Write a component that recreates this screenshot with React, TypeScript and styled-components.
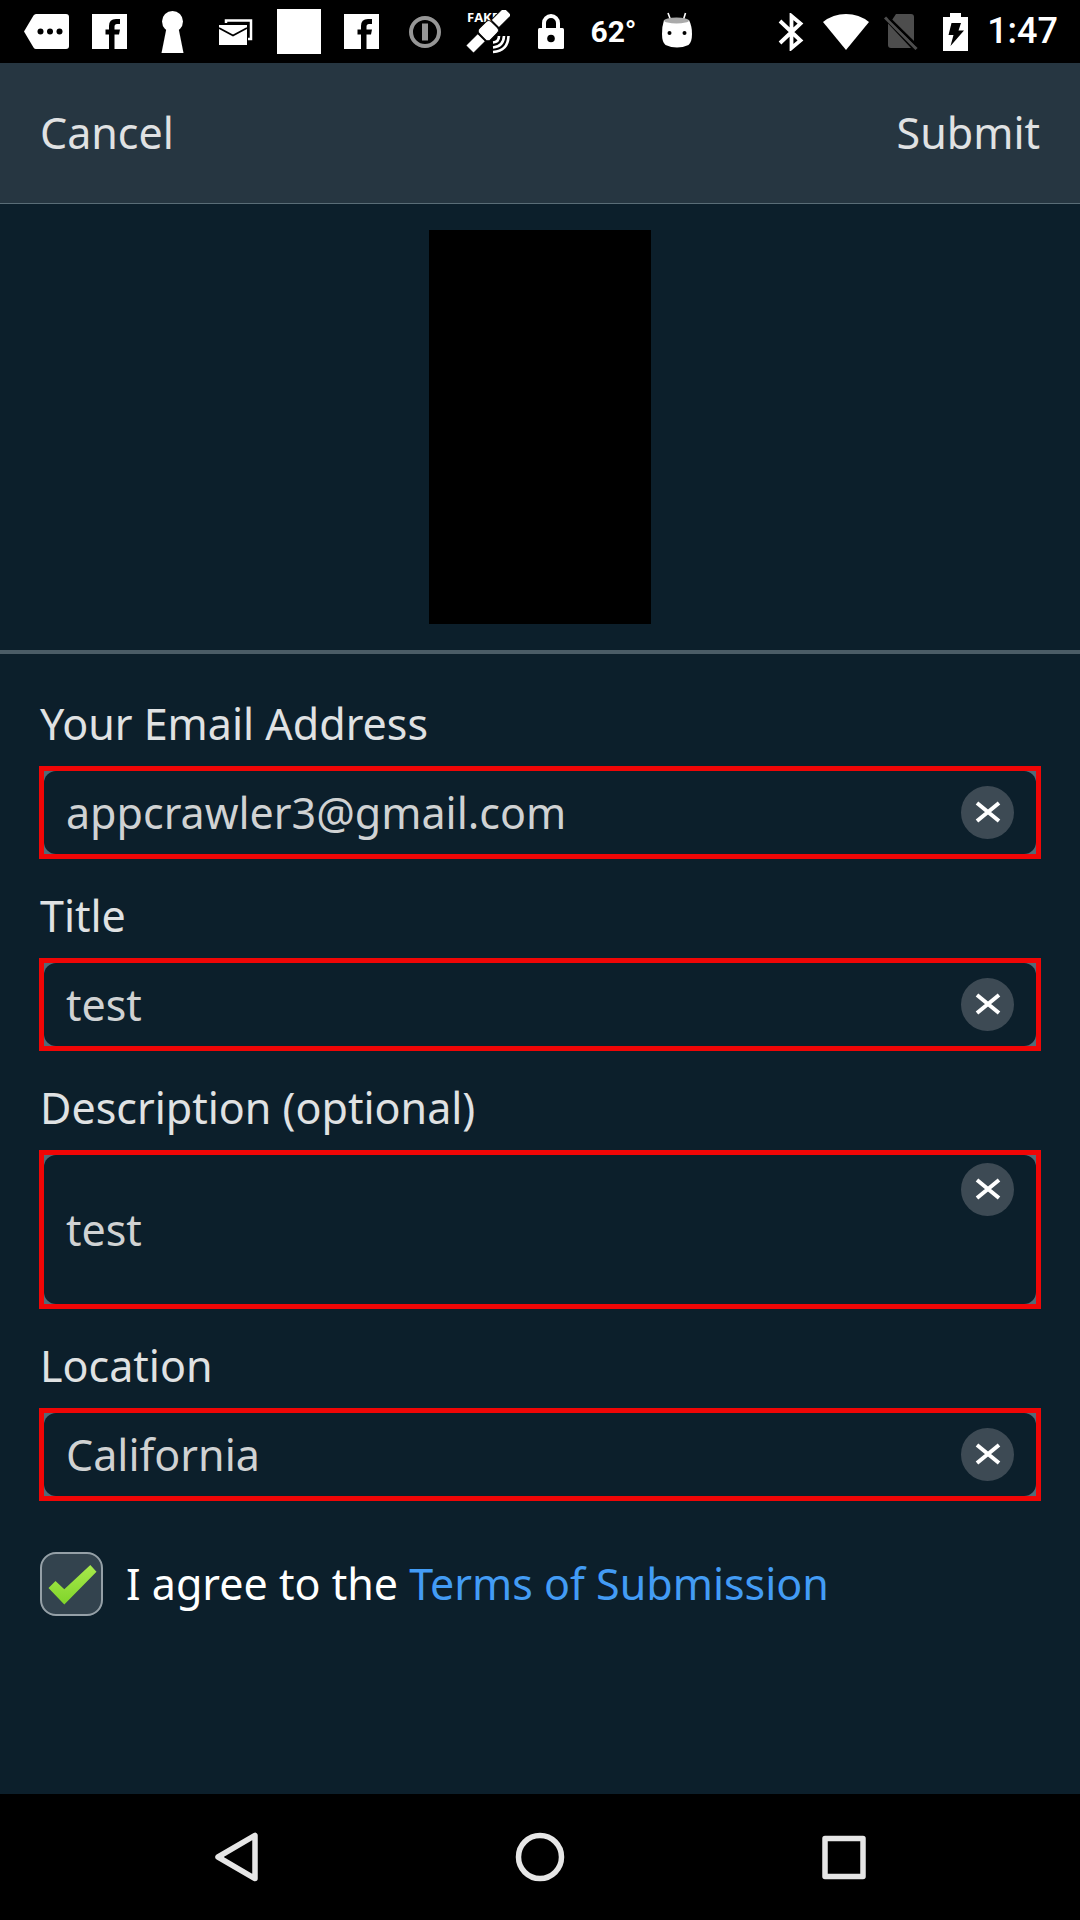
import React, { useState } from "react";
import styled, { createGlobalStyle } from "styled-components";

const GlobalStyle = createGlobalStyle`
  *, *::before, *::after { box-sizing: border-box; }
  body { margin: 0; background: #0c1f2b; }
  button, input, textarea { font: inherit; color: inherit; margin: 0; }
`;

const Screen = styled.div`
  display: flex;
  flex-direction: column;
  min-height: 100vh;
  background: #0c1f2b;
  color: #e0e2e3;
  font-family: "Noto Sans", "Open Sans", sans-serif;
  font-size: 43px;
  line-height: 60px;
`;

const StatusBar = styled.div`
  display: flex;
  justify-content: space-between;
  align-items: center;
  height: 63px;
  padding: 0 22px 0 15px;
  background: #000;
  color: #fff;
  font-family: Roboto, sans-serif;
  font-weight: 500;
`;

const StatusGroup = styled.div`
  display: flex;
  align-items: center;
`;

const Slot = styled.span<{ $width: number }>`
  display: flex;
  justify-content: center;
  width: ${(p) => p.$width}px;
  line-height: 63px;

  svg {
    display: block;
    flex: none;
  }
`;

const Temperature = styled.span`
  font-size: 30px;
  font-weight: 700;
`;

const Clock = styled.time`
  margin-left: 4px;
  font-size: 36px;
  line-height: 63px;
`;

const Header = styled.header`
  display: flex;
  justify-content: space-between;
  align-items: center;
  height: 141px;
  padding: 0 40px;
  background: #263641;
  border-bottom: 1px solid #5a6d77;
`;

const HeaderButton = styled.button`
  padding: 0;
  border: 0;
  background: none;
  cursor: pointer;
`;

const Preview = styled.section`
  display: flex;
  justify-content: center;
  padding: 26px 0;
  border-bottom: 4px solid #4b5c66;
`;

const PreviewImage = styled.div`
  width: 222px;
  height: 394px;
  background: #000;
`;

const Form = styled.form`
  display: flex;
  flex: 1;
  flex-direction: column;
  padding: 40px 39px;
`;

const Field = styled.div`
  display: flex;
  flex-direction: column;
  gap: 12px;
  margin-bottom: 27px;
`;

const Label = styled.label`
  padding-left: 1px;
`;

const Outline = styled.div`
  border: 5px solid #f00606;
  background: #526b78;
`;

const FieldBody = styled.div<{ $tall?: boolean }>`
  display: flex;
  align-items: ${(p) => (p.$tall ? "flex-start" : "center")};
  height: ${(p) => (p.$tall ? 149 : 83)}px;
  padding: ${(p) => (p.$tall ? 8 : 0)}px 22px;
  border-radius: 12px;
  background: #0c1f2b;
  color: #d0d2d3;
`;

const TextInput = styled.input`
  flex: 1;
  min-width: 0;
  height: 60px;
  padding: 0;
  border: 0;
  outline: 0;
  background: none;
`;

const TextArea = styled.textarea`
  flex: 1;
  min-width: 0;
  height: 133px;
  padding: 37px 0 36px;
  border: 0;
  outline: 0;
  resize: none;
  overflow: hidden;
  background: none;
`;

const ClearButton = styled.button`
  display: flex;
  justify-content: center;
  align-items: center;
  width: 53px;
  height: 53px;
  padding: 0 0 2px;
  border: 0;
  border-radius: 50%;
  background: #3d4a54;
  cursor: pointer;
`;

const Agreement = styled.div`
  display: flex;
  align-items: center;
  gap: 23px;
  min-height: 64px;
  margin-top: 24px;
  padding-left: 1px;
  color: #fff;
`;

const CheckFrame = styled.span`
  display: grid;
  width: 63px;
  height: 64px;

  > * {
    grid-area: 1 / 1;
  }

  svg {
    pointer-events: none;
  }
`;

const CheckInput = styled.input`
  appearance: none;
  width: 63px;
  height: 64px;
  border: 2px solid #95a0a7;
  border-radius: 16px;
  background: #33434e;

  &:not(:checked) + svg {
    visibility: hidden;
  }
`;

const TermsLink = styled.a`
  color: #439cf5;
  text-decoration: none;
`;

const NavBar = styled.nav`
  display: grid;
  grid-template-columns: repeat(3, 1fr);
  height: 126px;
  padding: 0 85px;
  background: #000;
`;

const NavButton = styled.button`
  display: flex;
  justify-content: center;
  align-items: center;
  padding: 0;
  border: 0;
  background: none;
  cursor: pointer;
`;

const MoreIcon = () => (
  <svg width="46" height="36" viewBox="0 0 46 36">
    <path d="M12 0H42a3 3 0 0 1 3 3V32a3 3 0 0 1-3 3H12Q10.500 35 9.500 33.500L0 17.500 9.500 1.500Q10.500 0 12 0Z" fill="#fff" />
    <g fill="#000"><circle cx="16.500" cy="17.500" r="3" /><circle cx="26" cy="17.500" r="3" /><circle cx="35.500" cy="17.500" r="3" /></g>
  </svg>
);

const FacebookIcon = () => (
  <svg width="36" height="36" viewBox="0 0 36 36">
    <path d="M0 0H35V35H0Z" fill="#fff" />
    <path d="M17 36V20.500H13.500V15.500H17V12Q17 5 24 5H28V10H25Q22.500 10 22.500 12.500V15.500H28L27 20.500H22.500V36Z" fill="#000" />
  </svg>
);

const KeyholeIcon = () => (
  <svg width="23" height="42" viewBox="0 0 23 42">
    <circle cx="11.500" cy="10.500" r="10.500" fill="#fff" />
    <path d="M5.500 17H17.500L22.500 42H.5Z" fill="#fff" />
  </svg>
);

const MailIcon = () => (
  <svg width="34" height="26" viewBox="0 0 34 26">
    <path d="M7 4V1.500H32V20H29" fill="none" stroke="#fff" strokeWidth="2.500" />
    <path d="M0 6H28V26H0Z" fill="#fff" />
    <path d="M0 9L14 16.500 28 9" fill="none" stroke="#000" strokeWidth="1.800" />
  </svg>
);

const BlankIcon = () => (
  <svg width="44" height="45" viewBox="0 0 44 45"><path d="M0 0H44V45H0Z" fill="#fff" /></svg>
);

const InfoIcon = () => (
  <svg width="32" height="32" viewBox="0 0 32 32">
    <circle cx="16" cy="16" r="14" fill="none" stroke="#969696" strokeWidth="4" />
    <path d="M16 7.500V24.500" stroke="#969696" strokeWidth="6" />
  </svg>
);

const SatelliteIcon = () => (
  <svg width="44" height="44" viewBox="0 0 44 44">
    <text x="1" y="12" fill="#fff" fontSize="13" fontWeight="700" fontFamily="Open Sans, sans-serif">FAKE</text>
    <g transform="rotate(45 22 21)" stroke="#000" strokeWidth="1" fill="#fff">
      <path d="M16.500 -7H27.500V11H16.500Z" />
      <path d="M16.500 30H27.500V47H16.500Z" />
      <rect x="14" y="12" width="16" height="17" rx="4" />
    </g>
    <g fill="none" stroke="#fff" strokeWidth="2.600">
      <path d="M33 26Q33 32 27 32.500" /><path d="M38 26Q37.500 36.500 27 37.500" /><path d="M42.500 26Q42 41 27 42" />
    </g>
  </svg>
);

const LockIcon = () => (
  <svg width="26" height="36" viewBox="0 0 26 36">
    <path d="M6 16V9a7 7 0 0 1 14 0V16" fill="none" stroke="#fff" strokeWidth="4" />
    <rect y="14" width="26" height="21" rx="1.500" fill="#fff" />
    <circle cx="13" cy="24.500" r="3.800" fill="#000" />
  </svg>
);

const AndroidIcon = () => (
  <svg width="32" height="40" viewBox="0 0 32 40">
    <path d="M7 1L10 9M24.500 1L22 9" stroke="#fff" strokeWidth="1.600" />
    <path d="M3 8H28Q31 14 31 22T27.500 33Q16 38 4.500 33Q1 30 1 22T3 8Z" fill="#fff" />
    <ellipse cx="15.500" cy="8.500" rx="12.500" ry="3" fill="#aaa" />
    <circle cx="8.500" cy="21" r="2" fill="#000" /><circle cx="23.500" cy="21" r="2" fill="#000" />
  </svg>
);

const BluetoothIcon = () => (
  <svg width="26" height="38" viewBox="0 0 26 38">
    <path d="M2 8L22.500 27.500 13.500 35V3L22.500 10.500 2 30" fill="none" stroke="#fff" strokeWidth="3.800" />
  </svg>
);

const WifiIcon = () => (
  <svg width="46" height="36" viewBox="0 0 46 36">
    <path d="M0 8Q10 0 23 0T46 8L23 36Z" fill="#fff" />
  </svg>
);

const NoSimIcon = () => (
  <svg width="34" height="36" viewBox="0 0 34 36">
    <path d="M12 0H27a3 3 0 0 1 3 3V29L8 6Z" fill="#4d4d4d" />
    <path d="M4 9.500L27 34H7a3 3 0 0 1-3-3Z" fill="#4d4d4d" />
    <path d="M1 3.500L32.500 35" stroke="#4d4d4d" strokeWidth="3" />
    <path d="M5 4L33 31.500" stroke="#000" strokeWidth="2.400" />
  </svg>
);

const BatteryIcon = () => (
  <svg width="25" height="38" viewBox="0 0 25 38">
    <path d="M0 4H7V0H18V4H25V38H0Z" fill="#fff" />
    <path d="M8.500 10H18L15.500 17.500H21L7.500 33L10.500 22H5.500Z" fill="#000" />
  </svg>
);

const CrossIcon = () => (
  <svg width="26" height="22" viewBox="0 0 26 22">
    <path d="M2 2L24 20M24 2L2 20" stroke="#fff" strokeWidth="4" />
  </svg>
);

const CheckIcon = () => (
  <svg width="63" height="64" viewBox="0 0 63 64">
    <defs>
      <linearGradient id="tick" x1="0" y1="0" x2="0" y2="1">
        <stop offset="0" stopColor="#a8ea4c" /><stop offset="1" stopColor="#80d42a" />
      </linearGradient>
    </defs>
    <path d="M8.500 36L15.500 29 24.300 37.300 50.300 13 56.500 19.700 24.300 52.500Z" fill="url(#tick)" />
  </svg>
);

const shapes = [
  { name: "Back", d: "M43 3.500V46.500L6 25Z" },
  { name: "Home", d: "M25 3.500A21.500 21.500 0 0 1 25 46.500A21.500 21.500 0 0 1 25 3.500Z" },
  { name: "Recent apps", d: "M7 6.500H45V44.500H7Z" },
];

type FieldRowProps = { id: string; label: string; initial: string; type?: string; tall?: boolean };

function FieldRow({ id, label, initial, type = "text", tall }: FieldRowProps) {
  const [value, setValue] = useState(initial);
  return (
    <Field>
      <Label htmlFor={id}>{label}</Label>
      <Outline>
        <FieldBody $tall={tall}>
          {tall ? (
            <TextArea id={id} value={value} onChange={(e) => setValue(e.target.value)} />
          ) : (
            <TextInput id={id} type={type} value={value} onChange={(e) => setValue(e.target.value)} />
          )}
          <ClearButton type="button" aria-label={`Clear ${label}`} onClick={() => setValue("")}>
            <CrossIcon />
          </ClearButton>
        </FieldBody>
      </Outline>
    </Field>
  );
}

const notifications = [
  <MoreIcon />, <FacebookIcon />, <KeyholeIcon />, <MailIcon />, <BlankIcon />, <FacebookIcon />,
  <InfoIcon />, <SatelliteIcon />, <LockIcon />, <Temperature>62°</Temperature>, <AndroidIcon />,
];

const systemIcons = [<BluetoothIcon />, <WifiIcon />, <NoSimIcon />, <BatteryIcon />];

export default function App() {
  return (
    <>
      <GlobalStyle />
      <Screen>
        <StatusBar>
          <StatusGroup>
            {notifications.map((icon, i) => <Slot key={i} $width={63}>{icon}</Slot>)}
          </StatusGroup>
          <StatusGroup>
            {systemIcons.map((icon, i) => <Slot key={i} $width={55}>{icon}</Slot>)}
            <Clock>1:47</Clock>
          </StatusGroup>
        </StatusBar>
        <Header>
          <HeaderButton type="button">Cancel</HeaderButton>
          <HeaderButton type="submit" form="submission">Submit</HeaderButton>
        </Header>
        <Preview>
          <PreviewImage role="img" aria-label="Preview" />
        </Preview>
        <Form id="submission" onSubmit={(e) => e.preventDefault()}>
          <FieldRow id="email" label="Your Email Address" initial="appcrawler3@gmail.com" type="email" />
          <FieldRow id="title" label="Title" initial="test" />
          <FieldRow id="description" label="Description (optional)" initial="test" tall />
          <FieldRow id="location" label="Location" initial="California" />
          <Agreement>
            <CheckFrame>
              <CheckInput id="agree" type="checkbox" defaultChecked />
              <CheckIcon />
            </CheckFrame>
            <span>
              <label htmlFor="agree">I agree to the</label> <TermsLink href="#terms">Terms of Submission</TermsLink>
            </span>
          </Agreement>
        </Form>
        <NavBar>
          {shapes.map((s) => (
            <NavButton key={s.name} type="button" aria-label={s.name}>
              <svg width="50" height="50" viewBox="0 0 50 50">
                <path d={s.d} fill="none" stroke="#e6e6e6" strokeWidth="5.500" strokeLinejoin="round" />
              </svg>
            </NavButton>
          ))}
        </NavBar>
      </Screen>
    </>
  );
}
